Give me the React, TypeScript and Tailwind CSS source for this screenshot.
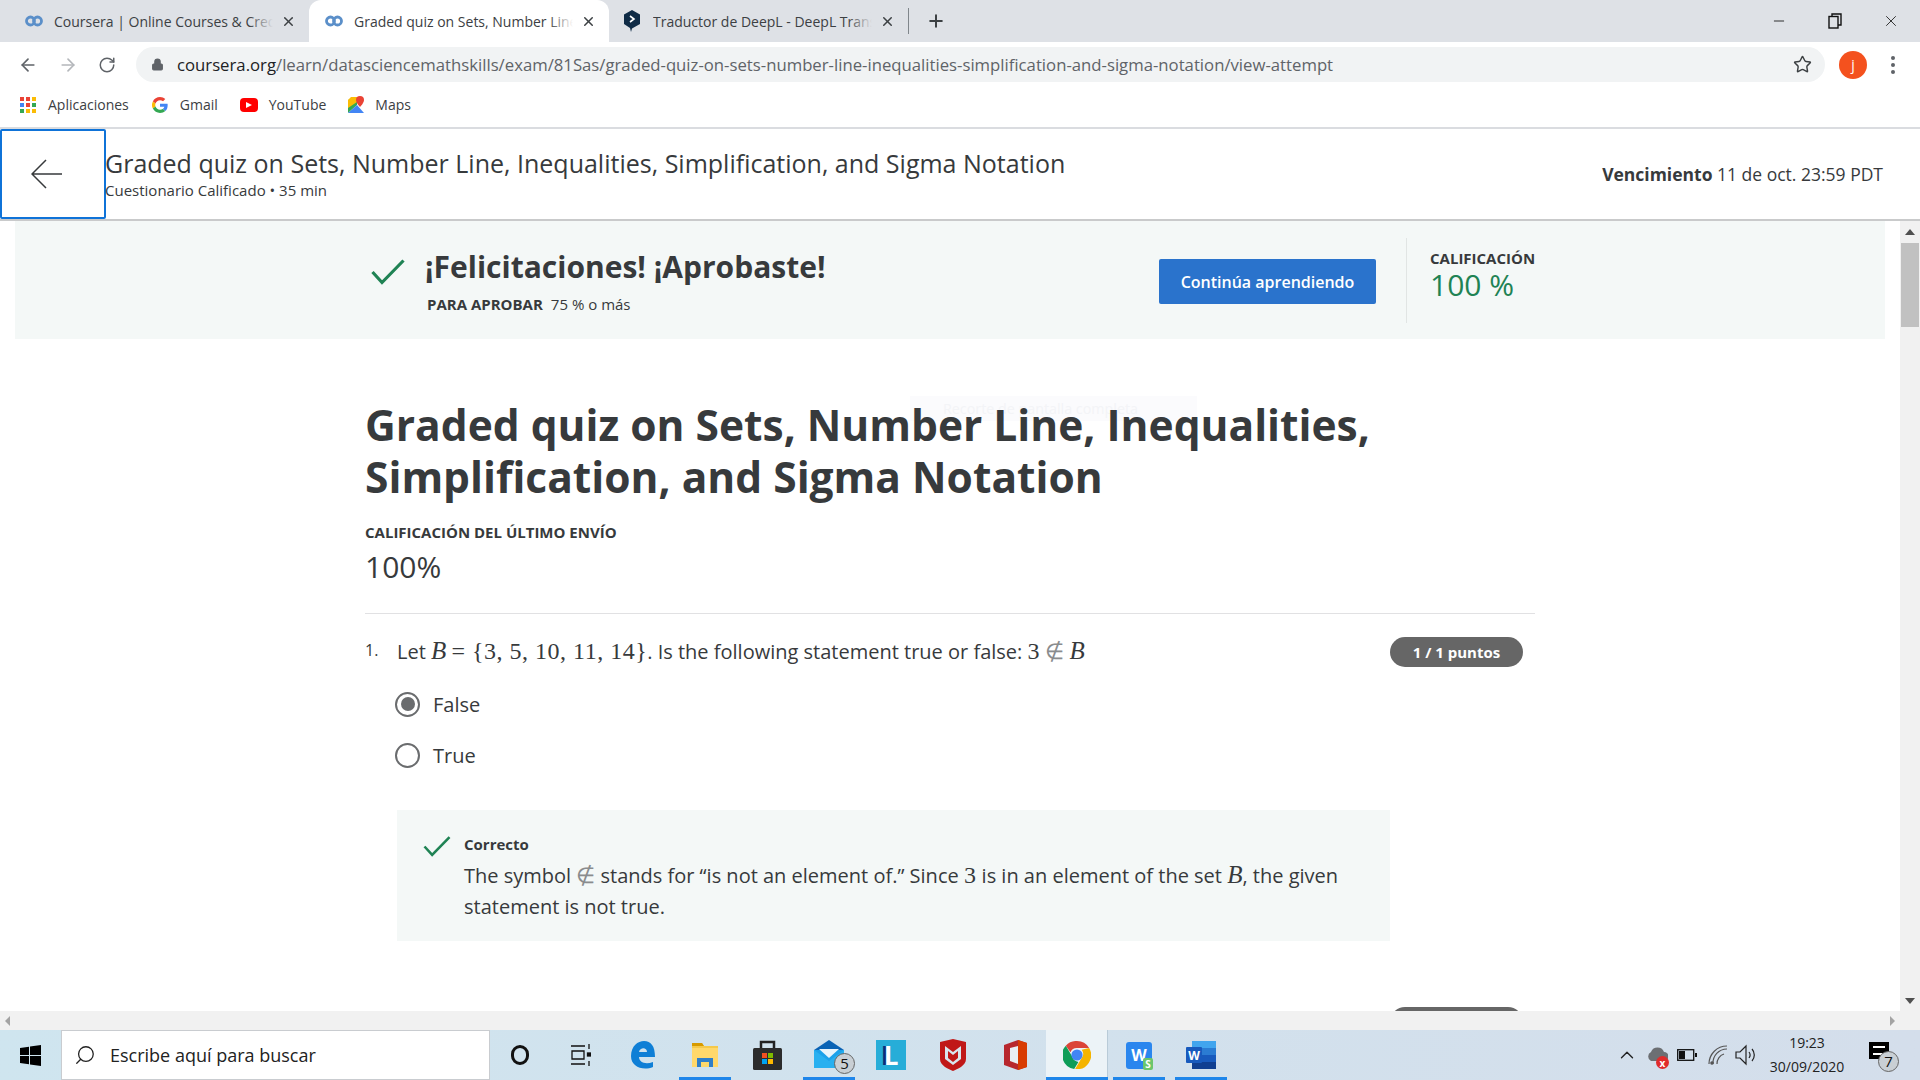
import React from "react";
import { ArrowLeft, ArrowRight, RotateCw, Lock, Star, Search, X, Plus, Minus, ChevronUp } from "lucide-react";

function CourseraIcon() {
  return (
    <svg width="20" height="12" viewBox="0 0 20 12" fill="none" stroke="#5b8fc9" strokeWidth="2.8">
      <circle cx="6.500" cy="6" r="4" />
      <circle cx="13.500" cy="6" r="4" />
    </svg>
  );
}

function DeepLIcon() {
  return (
    <svg width="18" height="22" viewBox="0 0 18 22">
      <path d="M9 0 L17 4.500 V14 L9 18.500 L8 22 L7 18 L1 14 V4.500 Z" fill="#0f2b46" />
      <path d="M7 6 L11 9 L7 12" fill="none" stroke="#fff" strokeWidth="1.600" />
    </svg>
  );
}

function Tab({ icon, title, active }: { icon: React.ReactNode; title: string; active?: boolean }) {
  return (
    <div className={`relative flex h-[42px] w-[300px] shrink-0 items-center pl-[15px] pr-[13px] ${active ? "rounded-t-xl bg-white" : ""}`}>
      <div className="flex w-[30px] shrink-0 items-center">{icon}</div>
      <div className="relative mr-2 flex-1 overflow-hidden whitespace-nowrap text-[14px] text-[#3c4043]">
        {title}
        <div className={`absolute inset-y-0 right-0 w-6 bg-gradient-to-r from-transparent ${active ? "to-white" : "to-[#dee1e6]"}`} />
      </div>
      <X className="h-[15px] w-[15px] shrink-0 text-[#3c4043]" strokeWidth={2.4} />
    </div>
  );
}

function BrowserChrome() {
  return (
    <div className="shrink-0">
      <div className="flex h-[42px] items-center bg-[#dee1e6] pl-[9px]">
        <Tab icon={<CourseraIcon />} title="Coursera | Online Courses & Credentials" />
        <Tab icon={<CourseraIcon />} title="Graded quiz on Sets, Number Line" active />
        <div className="-ml-[1px]">
          <Tab icon={<DeepLIcon />} title="Traductor de DeepL - DeepL Translate" />
        </div>
        <div className="h-[26px] w-px bg-[#80868b]" />
        <Plus className="ml-[17px] h-[20px] w-[20px] text-[#3c4043]" strokeWidth={2.4} />
        <div className="ml-auto flex items-center pr-[20px]">
          <Minus className="h-4 w-4 text-[#222]" strokeWidth={1.4} />
          <svg className="ml-[41px]" width="14" height="16" viewBox="0 0 14 16" fill="none" stroke="#111" strokeWidth="1.400">
            <rect x="1" y="3.500" width="9" height="11.500" />
            <path d="M4 3.500 V1 H13 V12 H10" />
          </svg>
          <X className="ml-[40px] h-[18px] w-[18px] text-[#222]" strokeWidth={1.2} />
        </div>
      </div>

      <div className="flex h-[42px] items-center bg-white pt-[3px]">
        <ArrowLeft className="ml-[18px] h-[20px] w-[20px] text-[#5f6368]" strokeWidth={2} />
        <ArrowRight className="ml-[20px] h-[20px] w-[20px] text-[#b4b7bb]" strokeWidth={2} />
        <RotateCw className="ml-[20px] h-[18px] w-[18px] text-[#5f6368]" strokeWidth={2} />
        <div className="ml-[20px] flex h-[35px] w-[1689px] items-center rounded-full bg-[#f1f3f4] pl-[15px]">
          <Lock className="h-[13px] w-[13px] fill-[#5f6368] text-[#5f6368]" strokeWidth={2} />
          <div className="ml-[13px] whitespace-nowrap text-[16.730px] text-[#5f6368]">
            <span className="text-[#202124]">coursera.org</span>/learn/datasciencemathskills/exam/81Sas/graded-quiz-on-sets-number-line-inequalities-simplification-and-sigma-notation/view-attempt
          </div>
          <Star className="ml-auto mr-[13px] h-[19px] w-[19px] text-[#3c4043]" strokeWidth={1.8} />
        </div>
        <div className="ml-[14px] flex h-[28px] w-[28px] items-center justify-center rounded-full bg-[#f4511e] text-[14px] text-white">j</div>
        <div className="ml-[24px] flex flex-col gap-[3px]">
          <div className="h-[4px] w-[4px] rounded-full bg-[#5f6368]" />
          <div className="h-[4px] w-[4px] rounded-full bg-[#5f6368]" />
          <div className="h-[4px] w-[4px] rounded-full bg-[#5f6368]" />
        </div>
      </div>

      <div className="flex h-[45px] items-center border-b-2 border-[#dadce0] bg-white pb-[2px] pl-[20px] text-[14px] text-[#3c4043]">
        <div className="grid h-[16px] w-[16px] grid-cols-3 gap-[2px]">
          {["#ea4335", "#ea4335", "#fbbc05", "#4285f4", "#ea4335", "#34a853", "#34a853", "#fbbc05", "#fbbc05"].map((c, i) => (
            <div key={i} style={{ backgroundColor: c }} />
          ))}
        </div>
        <span className="ml-[12px]">Aplicaciones</span>
        <svg className="ml-[23px]" width="16" height="16" viewBox="0 0 48 48">
          <path fill="#ea4335" d="M24 9.500c3.500 0 6.600 1.200 9.100 3.600l6.800-6.800C35.800 2.500 30.300 0 24 0 14.600 0 6.500 5.400 2.600 13.200l7.900 6.200C12.400 13.700 17.700 9.500 24 9.500z" />
          <path fill="#4285f4" d="M47 24.500c0-1.600-.1-3.100-.4-4.500H24v9h13c-.6 3-2.200 5.500-4.800 7.200l7.700 6C44.400 38.500 47 32 47 24.500z" />
          <path fill="#fbbc05" d="M10.500 28.600A14.500 14.500 0 0 1 10.500 19.400l-7.900-6.200a24 24 0 0 0 0 21.600z" />
          <path fill="#34a853" d="M24 48c6.500 0 11.900-2.100 15.900-5.800l-7.700-6c-2.200 1.400-4.900 2.300-8.200 2.300-6.300 0-11.600-4.200-13.500-9.900l-7.900 6.200C6.500 42.600 14.600 48 24 48z" />
        </svg>
        <span className="ml-[12px]">Gmail</span>
        <div className="ml-[22px] flex h-[14px] w-[18px] items-center justify-center rounded-[4px] bg-[#f00]">
          <div className="ml-[1px] h-0 w-0 border-y-[3.500px] border-l-[6px] border-y-transparent border-l-white" />
        </div>
        <span className="ml-[11px]">YouTube</span>
        <svg className="ml-[21px]" width="18" height="18" viewBox="0 0 18 18">
          <path d="M1 4 L10 1 V9 L1 17 Z" fill="#34a853" />
          <path d="M1 17 L10 9 L17 17 Z" fill="#4285f4" />
          <path d="M4 1 H10 V6 L1 12 V4 Z" fill="#fbbc05" />
          <path d="M13 0 a4 4 0 0 1 4 4 c0 3-4 7-4 7 s-4-4-4-7 a4 4 0 0 1 4-4 z" fill="#ea4335" />
        </svg>
        <span className="ml-[10px]">Maps</span>
      </div>
    </div>
  );
}

function Check({ className = "" }: { className?: string }) {
  return (
    <svg className={className} viewBox="0 0 34 26" fill="none" stroke="#1f8354" strokeWidth="3.200">
      <path d="M1.500 13 L11 23.500 L32.500 1.500" />
    </svg>
  );
}

function M({ children }: { children: React.ReactNode }) {
  return <span className="font-['Liberation_Serif',serif] text-[24px] leading-none tracking-[0.5px] text-[#373a3c]">{children}</span>;
}

function V({ children }: { children: React.ReactNode }) {
  return <span className="font-['Liberation_Serif',serif] text-[25px] italic leading-none text-[#373a3c]">{children}</span>;
}

function NotIn() {
  return <span className="font-['Liberation_Serif',serif] text-[22px] leading-none text-[#8a8c8e]">∉</span>;
}

function CourseHeader() {
  return (
    <div className="flex h-[92px] shrink-0 items-stretch border-b-2 border-[#c9cacb] bg-white">
      <div className="flex w-[106px] shrink-0 items-center justify-center rounded-[2px] border-2 border-[#0f73d8] pr-[12px]">
        <svg width="32" height="30" viewBox="0 0 32 30" fill="none" stroke="#373a3c" strokeWidth="1.500">
          <path d="M31 15 H1 M15 1 L1 15 L15 29" />
        </svg>
      </div>
      <div className="-ml-[1px] flex flex-col pt-[17px]">
        <div className="text-[25px] leading-[34px] text-[#373a3c]">Graded quiz on Sets, Number Line, Inequalities, Simplification, and Sigma Notation</div>
        <div className="mt-[1px] text-[15px] leading-[18px] text-[#373a3c]">Cuestionario Calificado • 35 min</div>
      </div>
      <div className="ml-auto self-center pr-[37px] text-[17.500px] text-[#373a3c]">
        <span className="font-bold">Vencimiento</span> 11 de oct. 23:59 PDT
      </div>
    </div>
  );
}

function Banner() {
  return (
    <div className="mx-[15px] flex h-[118px] shrink-0 bg-[#f4f8f7] pl-[356px]">
      <Check className="mt-[38px] h-[26px] w-[34px] shrink-0" />
      <div className="ml-[20px] w-[734px] shrink-0 pt-[24px]">
        <div className="text-[30px] font-bold leading-[44px] text-[#373a3c]">¡Felicitaciones! ¡Aprobaste!</div>
        <div className="mt-[5px] pl-[2px] text-[15px] leading-[20px] text-[#373a3c]">
          <span className="font-bold">PARA APROBAR</span>
          <span className="ml-2">75 % o más</span>
        </div>
      </div>
      <div className="mt-[38px] flex h-[45px] w-[217px] shrink-0 items-center justify-center rounded-[2px] bg-[#2a73cc] text-[16px] font-semibold text-white">
        Continúa aprendiendo
      </div>
      <div className="ml-[30px] mt-[17px] h-[85px] w-px bg-[#e1e5e4]" />
      <div className="ml-[23px] pt-[27px]">
        <div className="text-[15px] font-bold leading-[20px] text-[#373a3c]">CALIFICACIÓN</div>
        <div className="mt-[1px] text-[30px] leading-[32px] text-[#1f8354]">100 %</div>
      </div>
    </div>
  );
}

function Radio({ label, checked }: { label: string; checked?: boolean }) {
  return (
    <div className="-ml-[2px] flex h-[28px] items-center">
      <div className="flex h-[25px] w-[25px] items-center justify-center rounded-full border-[2.500px] border-[#6a6c6e]">
        {checked && <div className="h-[14px] w-[14px] rounded-full bg-[#6a6c6e]" />}
      </div>
      <span className="ml-[13px] pt-[2px] text-[20px] text-[#373a3c]">{label}</span>
    </div>
  );
}

function Quiz() {
  return (
    <div className="relative mx-[365px] pt-[60px]">
      {/* barely visible snipping tool hint behind the heading */}
      <div className="absolute left-[545px] top-[57px] flex h-[25px] w-[287px] items-center bg-[#fbfbfd] pl-[33px] text-[14.300px] text-[#f3f4f7]">
        Recorte de pantalla completa
      </div>
      <h1 className="relative text-[42.500px] font-bold leading-[52px] text-[#373a3c]">
        Graded quiz on Sets, Number Line, Inequalities, Simplification, and Sigma Notation
      </h1>
      <div className="mt-[19px] text-[15px] font-bold leading-[20px] text-[#373a3c]">CALIFICACIÓN DEL ÚLTIMO ENVÍO</div>
      <div className="mt-[5px] text-[30px] leading-[40px] text-[#373a3c]">100%</div>
      <div className="mt-[26px] h-px bg-[#e1e1e3]" />

      <div className="mt-[23px] flex items-start">
        <div className="w-[32px] shrink-0 pt-[1px] text-[16px] text-[#373a3c]">1.</div>
        <div className="flex-1">
          <div className="flex items-start justify-between pr-[12px]">
            <div className="text-[20px] leading-[30px] text-[#373a3c]">
              Let <V>B</V> <M>= {"{"}3, 5, 10, 11, 14{"}"}</M>. Is the following statement true or false: <M>3</M> <NotIn /> <V>B</V>
            </div>
            <div className="flex h-[30px] w-[133px] items-center justify-center rounded-full bg-[#666666] text-[15px] font-bold text-white">
              1 / 1 puntos
            </div>
          </div>
          <div className="mt-[23px] flex flex-col gap-[23px]">
            <Radio label="False" checked />
            <Radio label="True" />
          </div>
          <div className="mt-[41px] flex w-[993px] bg-[#f4f8f7] pb-[19px] pl-[26px] pt-[24px]">
            <Check className="mt-[2px] h-[21px] w-[28px] shrink-0" />
            <div className="ml-[13px] text-[#373a3c]">
              <div className="text-[15px] font-bold leading-[20px]">Correcto</div>
              <div className="mt-[6px] text-[20px] leading-[31px]">
                The symbol <NotIn /> stands for “is not an element of.” Since <M>3</M> is in an element of the set <V>B</V>, the given statement is not true.
              </div>
            </div>
          </div>
        </div>
      </div>

      <div className="mt-[66px] flex items-start">
        <div className="w-[32px] shrink-0 pt-[8px] text-[16px] text-[#373a3c]">2.</div>
        <div className="flex flex-1 justify-between pr-[12px]">
          <div className="text-[20px] leading-[30px] text-[#373a3c]">
            Let <V>A</V> <M>= {"{"}1, 2{"}"}</M> and <V>B</V> <M>= {"{"}3, 5, 10, 11, 14{"}"}</M>
          </div>
          <div className="flex h-[30px] w-[133px] items-center justify-center rounded-full bg-[#666666] text-[15px] font-bold text-white">
            1 / 1 puntos
          </div>
        </div>
      </div>
    </div>
  );
}

function TaskCell({ children, on, active }: { children: React.ReactNode; on?: boolean; active?: boolean }) {
  return (
    <div className={`relative flex h-[50px] w-[62px] shrink-0 items-center justify-center ${active ? "bg-[#ecf3f7]" : ""}`}>
      {children}
      {on && <div className={`absolute bottom-0 h-[3px] bg-[#1f86ea] ${active ? "inset-x-0" : "inset-x-[5px]"}`} />}
    </div>
  );
}

function Taskbar() {
  return (
    <div className="flex h-[50px] shrink-0 items-center bg-gradient-to-r from-[#cfe5ef] to-[#d4deeb] text-[#111]">
      <div className="flex w-[61px] shrink-0 justify-center">
        <svg width="21" height="21" viewBox="0 0 21 21" fill="#000">
          <path d="M0 3 L9 1.700 V10 H0 Z M10 1.500 L21 0 V10 H10 Z M0 11 H9 V19.300 L0 18 Z M10 11 H21 V21 L10 19.500 Z" />
        </svg>
      </div>
      <div className="flex h-full w-[429px] shrink-0 items-center border border-[#c9ccd0] bg-white pl-[12px]">
        <Search className="h-[22px] w-[22px] -scale-x-100 text-[#222]" strokeWidth={1.4} />
        <span className="ml-[14px] text-[18px] text-[#222]">Escribe aquí para buscar</span>
      </div>

      <div className="flex h-[50px] w-[60px] shrink-0 items-center justify-center">
        <div className="h-[20px] w-[18px] rounded-full border-[3px] border-[#111]" />
      </div>
      <TaskCell>
        <svg width="20" height="22" viewBox="0 0 20 22" fill="none" stroke="#111" strokeWidth="1.300">
          <path d="M0 2 H14 M1 7 H13 V15 H1 Z M0 20 H14 M18 0 V5 M18 17 V22" />
          <rect x="16.500" y="9" width="3" height="3" fill="#111" />
        </svg>
      </TaskCell>
      <TaskCell>
        <svg width="26" height="28" viewBox="0 0 26 28">
          <path d="M1 15 C1 5 8 0 14 0 C21 0 25 5 25 16 H9 C9 21 15 24 23 21 V26 C13 30 1 26 1 15 Z M9 11 H17 C17 6 10 6 9 11 Z" fill="#0f7fd6" />
        </svg>
      </TaskCell>
      <TaskCell on>
        <svg width="26" height="24" viewBox="0 0 26 24">
          <path d="M0 0 H10 L12 3 H26 V24 H0 Z" fill="#f5c94a" />
          <path d="M0 0 H10 L12 3 H0 Z" fill="#d79a00" />
          <path d="M0 5 H26 V24 H0 Z" fill="#ffd86b" />
          <path d="M5 24 V15 H21 V24 H17 V19 H9 V24 Z" fill="#2f7fc9" />
        </svg>
        <div className="absolute bottom-0 right-[5px] h-[3px] w-[10px] bg-[#76b4f2]" />
      </TaskCell>
      <TaskCell>
        <svg width="29" height="30" viewBox="0 0 29 30">
          <path d="M8 8 V2 H21 V8" fill="none" stroke="#222" strokeWidth="2.500" />
          <rect y="8" width="29" height="22" rx="1.500" fill="#2c2c2c" />
          <rect x="9" y="13" width="5" height="5" fill="#f25022" />
          <rect x="15" y="13" width="5" height="5" fill="#7fba00" />
          <rect x="9" y="19" width="5" height="5" fill="#00a4ef" />
          <rect x="15" y="19" width="5" height="5" fill="#ffb900" />
        </svg>
      </TaskCell>
      <TaskCell on>
        <svg className="-ml-[1px] -mt-[3px]" width="30" height="28" viewBox="0 0 30 28">
          <path d="M0 10 L15 0 L30 10 Z" fill="#0a63b5" />
          <path d="M0 10 H30 V28 H0 Z" fill="#1ba1ea" />
          <path d="M5 9 H25 L15 18 Z" fill="#e8f4fb" />
          <path d="M0 10 L15 21 L30 10 V28 H0 Z" fill="#28b0f0" />
        </svg>
        <div className="absolute bottom-[6px] right-[5px] flex h-[21px] w-[21px] items-center justify-center rounded-full border border-[#666] bg-[#c9cfd4] text-[15px] leading-none text-[#111]">5</div>
      </TaskCell>
      <TaskCell>
        <div className="flex h-[30px] w-[30px] items-center justify-center bg-[#27add8] text-[26px] font-bold leading-none text-white [text-shadow:-3px_0_#0b2d7a]">L</div>
      </TaskCell>
      <TaskCell>
        <svg width="26" height="32" viewBox="0 0 26 32">
          <path d="M0 3 L13 0 L26 3 V20 C26 27 17 30 13 32 C9 30 0 27 0 20 Z" fill="#c01818" />
          <path d="M5 7 L13 13 L21 7 V20 L13 26 L5 20 Z" fill="#d8e6ee" />
          <path d="M8 12 L13 16 L18 12 V19 L13 23 L8 19 Z" fill="#c01818" />
        </svg>
      </TaskCell>
      <TaskCell>
        <svg width="23" height="30" viewBox="0 0 23 30">
          <path d="M0 5 L14 0 L23 3 V27 L14 30 L0 25 Z" fill="#b7272d" />
          <path d="M14 0 L23 3 V27 L14 30 Z" fill="#d83b01" />
          <path d="M6 8 L14 6 V24 L6 21 Z" fill="#e8eef3" />
        </svg>
      </TaskCell>
      <TaskCell on active>
        <svg width="28" height="28" viewBox="0 0 30 30">
          <path d="M15 0 A15 15 0 0 1 28 7.500 H15 A7.500 7.500 0 0 0 8 12 L3 5 A15 15 0 0 1 15 0 Z" fill="#db4437" />
          <path d="M3 5 L10 17 A7.500 7.500 0 0 0 16.500 22.400 L12 30 A15 15 0 0 1 3 5 Z" fill="#0f9d58" />
          <path d="M28 7.500 A15 15 0 0 1 13 30 L19.500 19 A7.500 7.500 0 0 0 20 9.500 Z" fill="#f4b400" />
          <circle cx="15" cy="15" r="6" fill="#4285f4" />
        </svg>
        <div className="absolute inset-y-0 right-0 w-px bg-[#b9cbd8]" />
      </TaskCell>
      <TaskCell on>
        <div className="relative flex h-[27px] w-[26px] items-center justify-center rounded-[3px] bg-[#2a86ee] text-[16px] font-bold text-white">
          W
          <div className="absolute -bottom-[1px] -right-[1px] flex h-[12px] w-[10px] items-center justify-center rounded-[2px] bg-[#6cc66c] text-[10px] leading-none">S</div>
        </div>
      </TaskCell>
      <TaskCell on>
        <svg width="30" height="28" viewBox="0 0 30 28">
          <rect x="6" width="24" height="7" fill="#41a5ee" />
          <rect x="6" y="7" width="24" height="7" fill="#2b7cd3" />
          <rect x="6" y="14" width="24" height="7" fill="#185abd" />
          <rect x="6" y="21" width="24" height="7" fill="#103f91" />
          <rect y="6" width="16" height="16" rx="1" fill="#185abd" />
          <text x="8" y="18.500" textAnchor="middle" fill="#fff" fontSize="12" fontWeight="700" fontFamily="Open Sans">W</text>
        </svg>
      </TaskCell>

      <div className="ml-auto flex items-center">
        <ChevronUp className="h-[22px] w-[22px] text-[#222]" strokeWidth={1.5} />
        <div className="relative ml-[8px] h-[22px] w-[22px]">
          <svg width="22" height="18" viewBox="0 0 22 18">
            <path d="M5 17 A5 5 0 0 1 5 8 A7 7 0 0 1 18 8 A4.500 4.500 0 0 1 18 17 Z" fill="#6c6f73" />
          </svg>
          <div className="absolute -bottom-[3px] -right-[1px] flex h-[13px] w-[13px] items-center justify-center rounded-full bg-[#e02b2b] text-[10px] font-bold leading-none text-white">x</div>
        </div>
        <svg className="ml-[9px]" width="20" height="12" viewBox="0 0 20 12">
          <rect x="0.700" y="0.700" width="16" height="10.600" fill="none" stroke="#111" strokeWidth="1.300" />
          <rect x="2" y="2" width="6" height="8" fill="#111" />
          <rect x="18" y="4" width="2" height="4" fill="#111" />
        </svg>
        <svg className="ml-[11px]" width="20" height="20" viewBox="0 0 20 20" fill="none" stroke="#555" strokeWidth="1.200">
          <path d="M1 19 A18 18 0 0 1 19 1 M5 19 A14 14 0 0 1 19 4 M9 19 A10 10 0 0 1 16 9" />
          <circle cx="4" cy="18" r="1.200" fill="#555" />
        </svg>
        <svg className="ml-[7px]" width="22" height="22" viewBox="0 0 22 22" fill="none" stroke="#222" strokeWidth="1.200">
          <path d="M1 8 H5 L11 2 V20 L5 14 H1 Z M14 8 A5 5 0 0 1 14 14 M17 5 A9 9 0 0 1 17 17" />
        </svg>
        <div className="ml-[9px] flex w-[82px] flex-col items-center text-[14px] leading-[24px] text-[#222]">
          <div>19:23</div>
          <div>30/09/2020</div>
        </div>
        <div className="relative -mt-[10px] ml-[21px] mr-[31px] h-[17px] w-[20px] bg-black">
          <div className="absolute left-[4px] top-[4px] h-[9px] w-[12px] border-y-2 border-white" />
          <div className="absolute -bottom-[13px] -right-[10px] flex h-[21px] w-[21px] items-center justify-center rounded-full border border-[#666] bg-[#c9cfd4] text-[15px] leading-none text-[#111]">7</div>
        </div>
      </div>
    </div>
  );
}

export default function App() {
  return (
    <div className="flex h-[1080px] w-[1920px] flex-col overflow-hidden bg-white font-['Open_Sans',sans-serif]">
      <BrowserChrome />
      <CourseHeader />
      <div className="flex min-h-0 flex-1">
        <div className="flex min-w-0 flex-1 flex-col">
          <div className="min-h-0 flex-1 overflow-hidden">
            <Banner />
            <Quiz />
          </div>
          {/* horizontal scrollbar */}
          <div className="flex h-[19px] shrink-0 items-center justify-between bg-[#f1f1f1] px-[5px]">
            <div className="h-0 w-0 border-y-[5px] border-r-[5px] border-y-transparent border-r-[#a3a3a3]" />
            <div className="h-0 w-0 border-y-[5px] border-l-[5px] border-y-transparent border-l-[#a3a3a3]" />
          </div>
        </div>
        {/* vertical scrollbar */}
        <div className="flex w-[20px] shrink-0 flex-col items-center bg-[#f1f1f1] pt-[8px]">
          <div className="h-0 w-0 border-x-[5px] border-b-[6px] border-x-transparent border-b-[#505050]" />
          <div className="mt-[8px] h-[84px] w-[18px] bg-[#c1c1c1]" />
          <div className="mb-[26px] mt-auto h-0 w-0 border-x-[5px] border-t-[6px] border-x-transparent border-t-[#505050]" />
        </div>
      </div>
      <Taskbar />
    </div>
  );
}
